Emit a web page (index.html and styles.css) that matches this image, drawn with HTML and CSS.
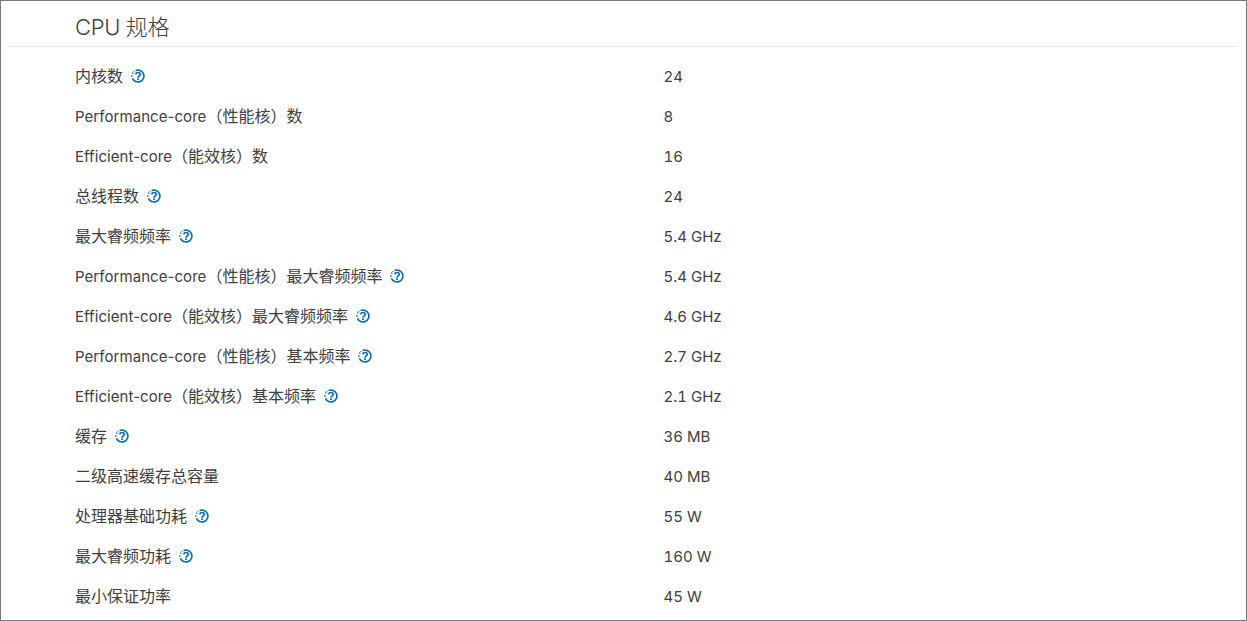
FILE: index.html
```html
<!DOCTYPE html>
<html lang="zh-CN">
<head>
<meta charset="utf-8">
<title>CPU 规格</title>
<link rel="stylesheet" href="styles.css">
</head>
<body>
<svg width="0" height="0" class="defs"><defs><symbol id="q" viewBox="0 0 14 14"><path d="M4.6 1.4A6 6 0 1 1 1.4 9.4" fill="none" stroke="#0068b5" stroke-width="1.6"/><path d="M.9 7.7V6.3M1.4 4.7l.5-1M2.7 2.9l.6-.5" fill="none" stroke="#0068b5" stroke-width="1.5"/><path d="M4.9 5.5C4.9 4.2 5.9 3.5 7 3.5s2.2.7 2.2 1.9C9.2 7 7 6.9 7 8.7" fill="none" stroke="#0068b5" stroke-width="1.6"/><rect x="6.1" y="9.4" width="1.8" height="1.6" fill="#0068b5"/></symbol></defs></svg>
<main class="frame">
  <h2 class="title"><span class="title-lat">CPU</span> 规格</h2>
  <div class="specs">
    <div class="row"><div class="label">内核数<svg class="help"><use href="#q"/></svg></div><div class="value">24</div></div>
    <div class="row"><div class="label"><span class="lat">Performance-core</span>（性能核）数</div><div class="value">8</div></div>
    <div class="row"><div class="label"><span class="lat">Efficient-core</span>（能效核）数</div><div class="value">16</div></div>
    <div class="row"><div class="label">总线程数<svg class="help"><use href="#q"/></svg></div><div class="value">24</div></div>
    <div class="row"><div class="label">最大睿频频率<svg class="help"><use href="#q"/></svg></div><div class="value">5.4 GHz</div></div>
    <div class="row"><div class="label"><span class="lat">Performance-core</span>（性能核）最大睿频频率<svg class="help"><use href="#q"/></svg></div><div class="value">5.4 GHz</div></div>
    <div class="row"><div class="label"><span class="lat">Efficient-core</span>（能效核）最大睿频频率<svg class="help"><use href="#q"/></svg></div><div class="value">4.6 GHz</div></div>
    <div class="row"><div class="label"><span class="lat">Performance-core</span>（性能核）基本频率<svg class="help"><use href="#q"/></svg></div><div class="value">2.7 GHz</div></div>
    <div class="row"><div class="label"><span class="lat">Efficient-core</span>（能效核）基本频率<svg class="help"><use href="#q"/></svg></div><div class="value">2.1 GHz</div></div>
    <div class="row"><div class="label">缓存<svg class="help"><use href="#q"/></svg></div><div class="value">36 MB</div></div>
    <div class="row"><div class="label">二级高速缓存总容量</div><div class="value">40 MB</div></div>
    <div class="row"><div class="label">处理器基础功耗<svg class="help"><use href="#q"/></svg></div><div class="value">55 W</div></div>
    <div class="row"><div class="label">最大睿频功耗<svg class="help"><use href="#q"/></svg></div><div class="value">160 W</div></div>
    <div class="row"><div class="label">最小保证功率</div><div class="value">45 W</div></div>
  </div>
</main>
</body>
</html>
```
FILE: styles.css
```css
html, body { margin: 0; padding: 0; background: #fff; overflow: hidden; }
.defs { display: block; height: 0; }
.frame {
  box-sizing: border-box;
  height: 621px;
  border: 1px solid #787878;
  overflow: hidden;
  font-family: "Noto Sans", "Noto Sans CJK SC", sans-serif;
  color: #404040;
}
.title {
  margin: 0 8px 0 6px;
  padding: 8px 0 0 68px;
  height: 37px;
  border-bottom: 1px solid #e9e9e9;
  font-size: 22px;
  line-height: 34px;
  font-weight: 300;
}
.title-lat { font-family: Inter, sans-serif; font-size: 22px; letter-spacing: -0.3px; }
.specs { padding: 9px 0 0 74px; }
.row {
  box-sizing: border-box;
  display: grid;
  grid-template-columns: 588.5px 1fr;
  height: 40px;
  padding-top: 8px;
  align-items: baseline;
  font-size: 16px;
  line-height: 24px;
}
.label { display: flex; align-items: baseline; height: 24px; }
.lat, .value { font-family: Inter, sans-serif; font-size: 15px; }
.lat { letter-spacing: 0.06px; }
.value { font-variant-numeric: tabular-nums; }
.help { width: 14px; height: 14px; margin-left: 8px; align-self: center; }
```
